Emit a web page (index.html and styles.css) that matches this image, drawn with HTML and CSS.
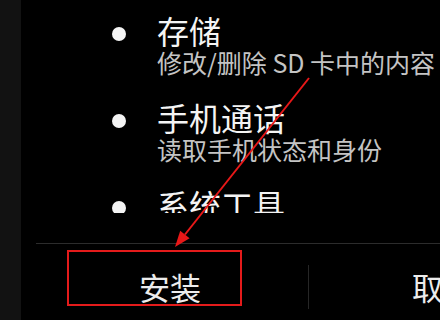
FILE: index.html
```html
<!DOCTYPE html>
<html lang="zh-CN">
<head>
<meta charset="utf-8">
<title>安装</title>
<link rel="stylesheet" href="styles.css">
</head>
<body>
<div class="screen">
  <div class="edge"></div>
  <div class="dialog">
    <div class="perms">
      <div class="perm">
        <span class="bullet"></span>
        <div class="perm-text">
          <div class="perm-title">存储</div>
          <div class="perm-desc">修改/删除 SD 卡中的内容</div>
        </div>
      </div>
      <div class="perm">
        <span class="bullet"></span>
        <div class="perm-text">
          <div class="perm-title">手机通话</div>
          <div class="perm-desc">读取手机状态和身份</div>
        </div>
      </div>
      <div class="perm">
        <span class="bullet"></span>
        <div class="perm-text">
          <div class="perm-title">系统工具</div>
        </div>
      </div>
    </div>
    <div class="divider"></div>
    <div class="buttons">
      <div class="btn">安装</div>
      <div class="vsep"></div>
      <div class="btn">取消</div>
    </div>
  </div>
  <div class="annot-box"></div>
  <svg class="annot-arrow" width="440" height="320" viewBox="0 0 440 320">
    <line x1="309" y1="78" x2="185" y2="234.5" stroke="#e81818" stroke-width="2"/>
    <polygon points="175,247 189.6,238.2 180.2,230.7" fill="#e81818"/>
  </svg>
</div>
</body>
</html>
```

FILE: styles.css
```css
html, body {
  margin: 0;
  padding: 0;
  background: #000;
}

.screen {
  position: relative;
  width: 440px;
  height: 320px;
  overflow: hidden;
  display: flex;
  background: #000;
  font-family: "Noto Sans CJK SC", "Noto Sans", sans-serif;
}

.edge {
  width: 21px;
  flex: none;
  background: #121212;
}

.dialog {
  flex: 1;
  display: flex;
  flex-direction: column;
  min-width: 0;
}

.perms {
  height: 213px;
  flex: none;
  overflow: hidden;
  box-sizing: border-box;
  padding: 13px 0 0 91px;
}

.perm {
  display: flex;
  align-items: flex-start;
  padding-bottom: 22px;
}

.bullet {
  flex: none;
  width: 14px;
  height: 14px;
  border-radius: 50%;
  background: #f4f4f4;
  margin-top: 14px;
  margin-right: 31px;
}

.perm-text {
  white-space: nowrap;
}

.perm-title {
  font-size: 32px;
  line-height: 34px;
  color: #f4f4f4;
}

.perm-desc {
  font-size: 25px;
  line-height: 31px;
  color: #c4c4c4;
}

.divider {
  margin: 30px 0 0 15px;
  height: 1px;
  background: #2c2c2c;
  flex: none;
}

.buttons {
  display: flex;
  align-items: center;
  height: 86px;
  flex: none;
  margin-left: 15px;
}

.btn {
  flex: none;
  width: 272px;
  box-sizing: border-box;
  padding-right: 4px;
  text-align: center;
  font-size: 31px;
  line-height: 40px;
  color: #ececec;
  white-space: nowrap;
}

.vsep {
  flex: none;
  width: 1px;
  height: 44px;
  background: #262626;
}

.annot-box {
  position: absolute;
  left: 67px;
  top: 250px;
  width: 175px;
  height: 56px;
  box-sizing: border-box;
  border: 2px solid #e41b1b;
}

.annot-arrow {
  position: absolute;
  left: 0;
  top: 0;
}
```
